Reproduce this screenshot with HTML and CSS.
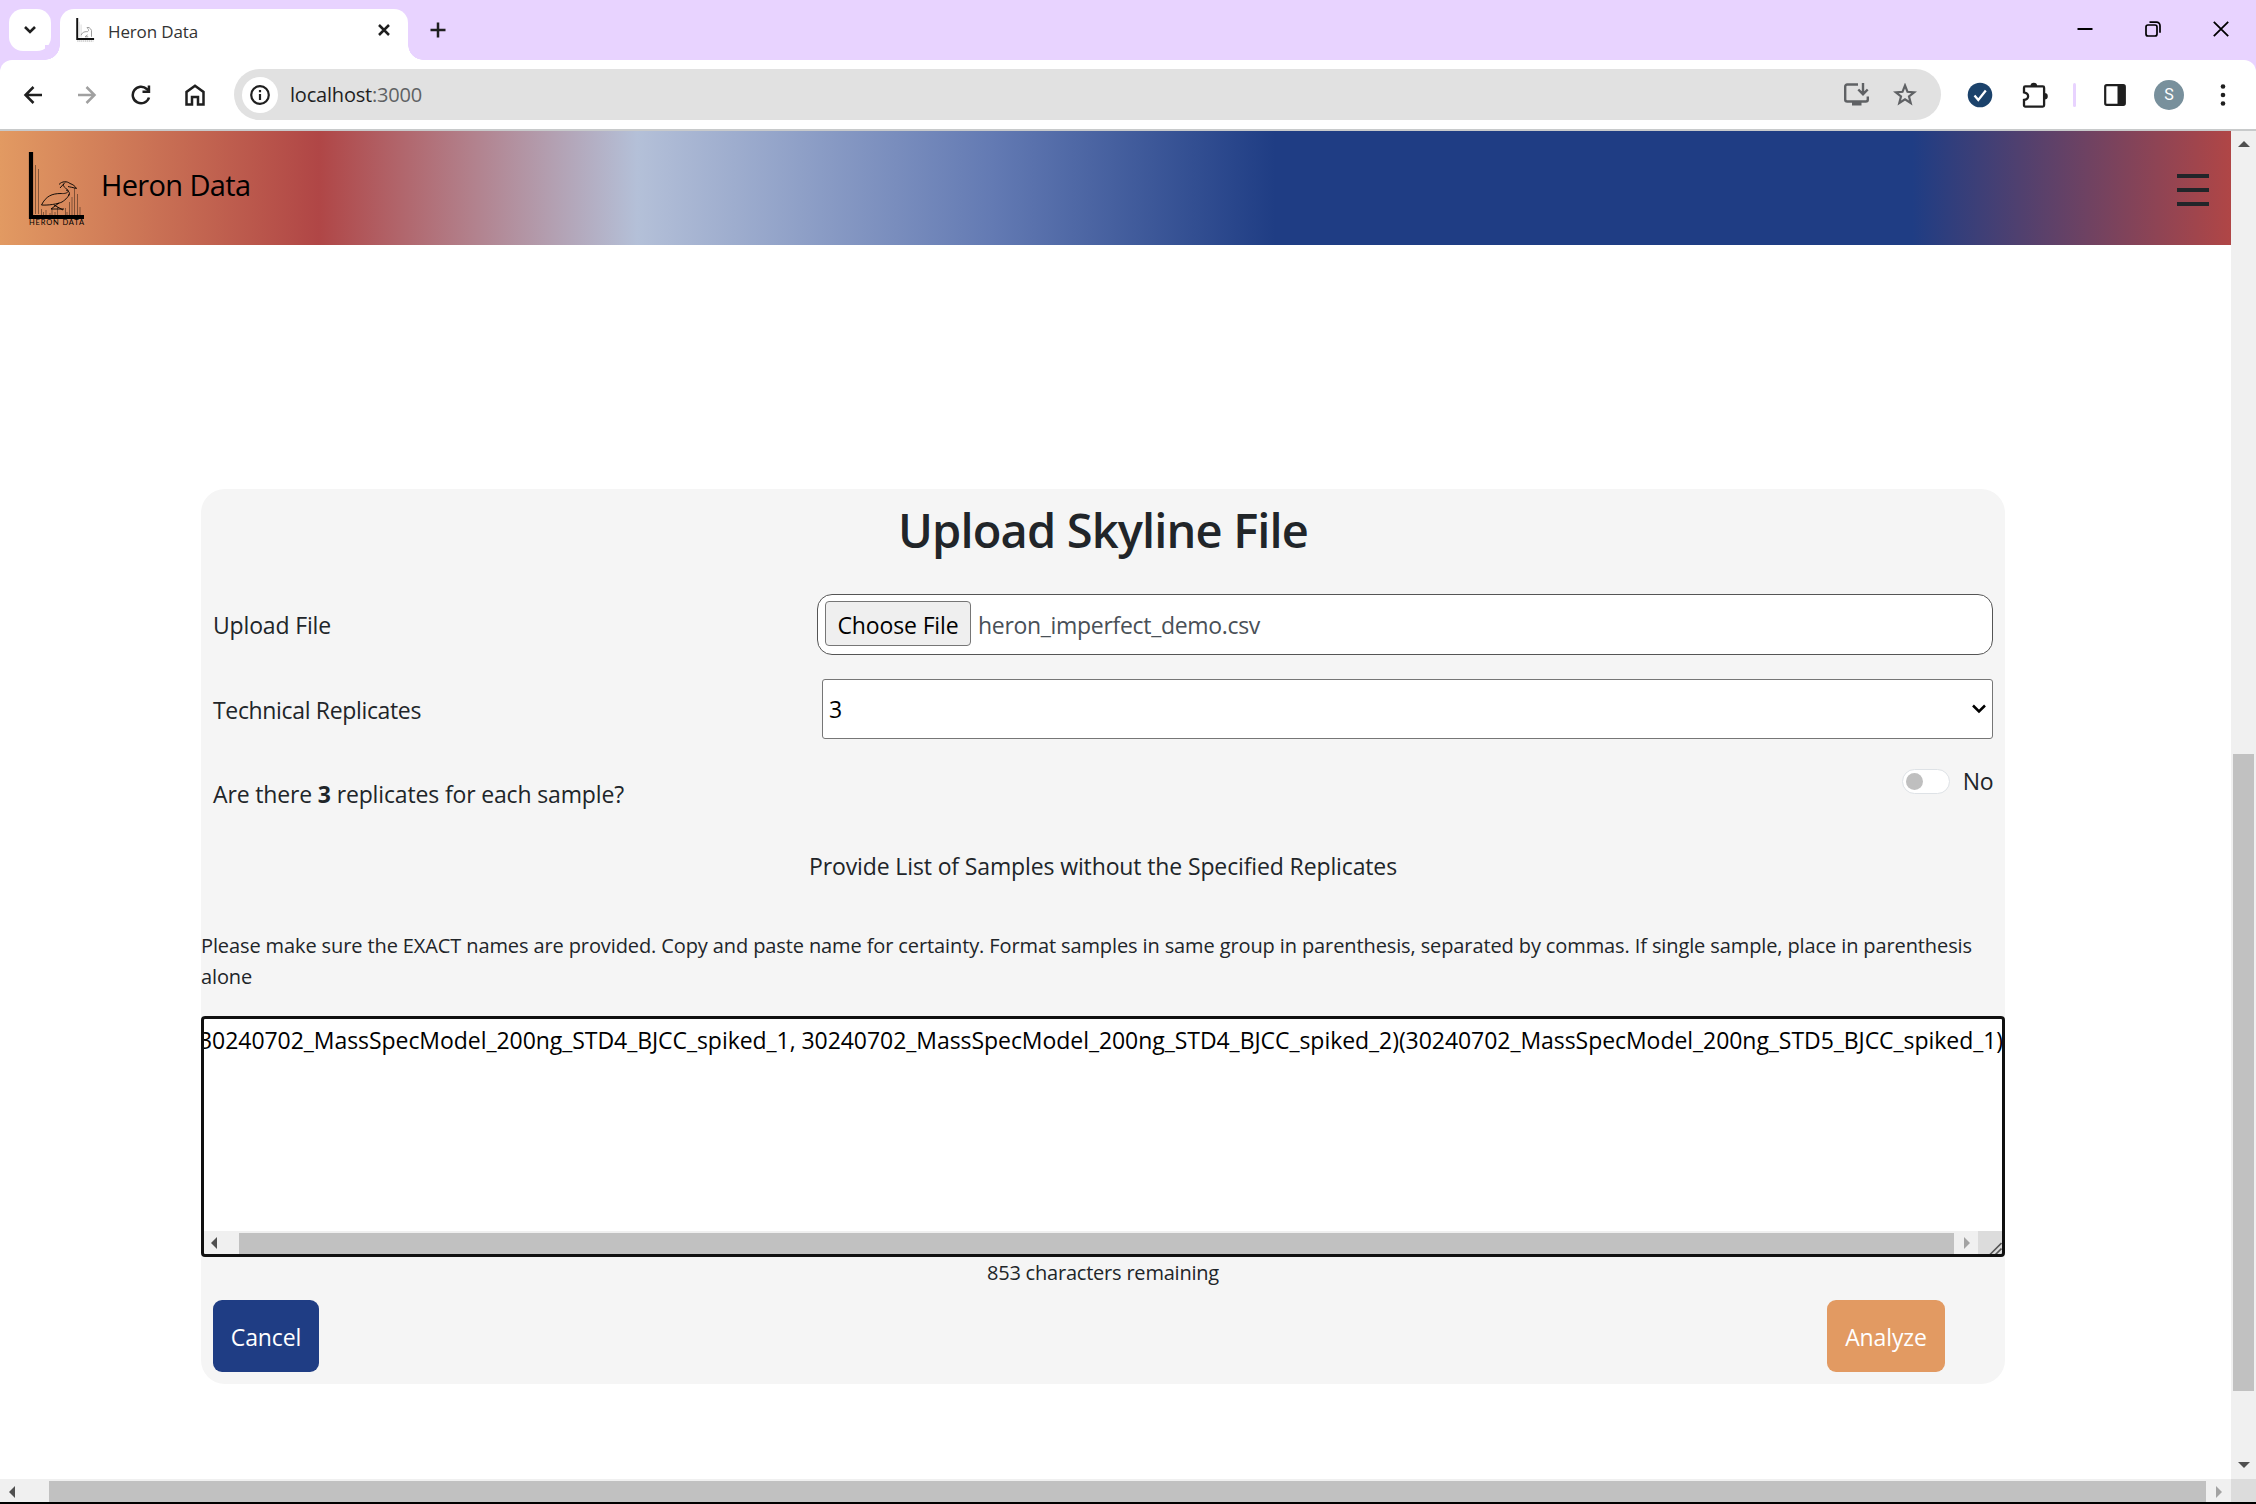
FILE: index.html
```html
<!DOCTYPE html>
<html lang="en">
<head>
<meta charset="utf-8">
<title>Heron Data</title>
<link rel="stylesheet" href="styles.css">
</head>
<body>
<div class="tabstrip">
  <div class="tabsearch"><svg width="14" height="10" viewBox="0 0 14 10"><path d="M2 2l5 5 5-5" fill="none" stroke="#1f1f1f" stroke-width="2.6"/></svg></div>
  <div class="tab">
    <svg class="favicon" width="20" height="24" viewBox="0 0 56 74"><path d="M4 0V65H56" fill="none" stroke="#111" stroke-width="6"/><path d="M10 12V60M16 20V60" stroke="#ccc" stroke-width="2"/><path d="M16 53C20 42 30 42 36 42C42 38 38 34 34 30C38 27 44 30 48 38V58M36 52L28 58H38" fill="none" stroke="#999" stroke-width="3"/><path d="M4 71H54" stroke="#aaa" stroke-width="3" stroke-dasharray="4 2"/></svg>
    <span class="tabtitle">Heron Data</span>
    <svg class="tabclose" width="14" height="14" viewBox="0 0 14 14"><path d="M2 2l10 10M12 2L2 12" stroke="#1f1f1f" stroke-width="2.5"/></svg>
  </div>
  <svg class="newtab" width="16" height="16" viewBox="0 0 16 16"><path d="M8 .5v15M.5 8h15" stroke="#1f1f1f" stroke-width="2.500"/></svg>
  <div class="wincontrols">
    <svg width="16" height="16" viewBox="0 0 16 16"><path d="M.5 8h15" stroke="#000" stroke-width="2"/></svg>
    <svg width="16" height="16" viewBox="0 0 16 16"><rect x="1" y="4" width="11" height="11" rx="2" fill="none" stroke="#000" stroke-width="1.700"/><path d="M4.500 1.200h7a3.500 3.500 0 0 1 3.500 3.500v7" fill="none" stroke="#000" stroke-width="1.700"/></svg>
    <svg width="16" height="16" viewBox="0 0 16 16"><path d="M.8.8l14.400 14.400M15.200.8L.8 15.200" stroke="#000" stroke-width="1.800"/></svg>
  </div>
</div>
<div class="toolbarwrap">
<div class="toolbar">
  <div class="navicons">
    <svg width="20" height="20" viewBox="0 0 20 20"><path d="M19 10H3M10.500 2L2.500 10l8 8" fill="none" stroke="#1f1f1f" stroke-width="2.500"/></svg>
    <svg width="20" height="20" viewBox="0 0 20 20"><path d="M1 10h16M9.500 2l8 8-8 8" fill="none" stroke="#a0a0a0" stroke-width="2.500"/></svg>
    <svg width="20" height="20" viewBox="0 0 20 20"><path d="M18 12.500A8.300 8.300 0 1 1 15.800 4L18 6.300" fill="none" stroke="#1f1f1f" stroke-width="2.500"/><path d="M19.200.5V8H11.500V5.500H16.700V.5z" fill="#1f1f1f"/></svg>
    <svg width="20" height="22" viewBox="0 0 20 22"><path d="M1.500 20.500V8L10 1.700 18.500 8v12.500h-5.500v-7.500H7v7.500z" fill="none" stroke="#1f1f1f" stroke-width="2.500"/></svg>
  </div>
  <div class="omnibox">
    <div class="siteinfo"><svg width="20" height="20" viewBox="0 0 20 20"><circle cx="10" cy="10" r="8.800" fill="none" stroke="#1f1f1f" stroke-width="2.200"/><path d="M10 9v6M10 5v2.200" stroke="#1f1f1f" stroke-width="2.200"/></svg></div>
    <span class="url">localhost<span class="port">:3000</span></span>
    <svg class="install" width="25" height="23" viewBox="0 0 25 23"><path d="M14 1.500H3.200A2 2 0 0 0 1.200 3.500v13a2 2 0 0 0 2 2h18.600a2 2 0 0 0 2-2V13.500" fill="none" stroke="#5f6164" stroke-width="2.400"/><path d="M8 18h9.500v4.500H8z" fill="#5f6164"/><path d="M19 0v11M14.300 6.500L19 11.200l4.700-4.700" fill="none" stroke="#5f6164" stroke-width="2.400"/></svg>
    <svg width="24" height="23" viewBox="0 0 24 23"><path d="M12 2.500l2.500 6.300 6.700.5-5.200 4.200 1.700 6.500L12 16.400 6.300 20l1.700-6.500-5.200-4.200 6.700-.5z" fill="none" stroke="#5f6164" stroke-width="2.200"/></svg>
  </div>
  <svg class="ext1" width="26" height="26" viewBox="0 0 26 26"><circle cx="13" cy="13" r="12.300" fill="#1b426b"/><path d="M7.500 13.500l3.800 4.500 7.500-9.500" fill="none" stroke="#fff" stroke-width="2.300"/></svg>
  <svg class="ext2" width="26" height="26" viewBox="0 0 26 26"><path d="M3.300 4.400h17.500a1.300 1.300 0 0 1 1.300 1.300v17.600a1.300 1.300 0 0 1-1.300 1.300H3.300A1.300 1.300 0 0 1 2 23.300v-5.300c5.500-1 5.500-6.500 0-7.700V5.700a1.300 1.300 0 0 1 1.300-1.300z" fill="none" stroke="#1f1f1f" stroke-width="2.300"/><path d="M8.500 4a3.300 3.300 0 0 1 6.600 0zM22.500 11a3.300 3.300 0 0 1 0 6.600z" fill="#1f1f1f"/></svg>
  <i class="sep"></i>
  <svg class="panelicon" width="22" height="22" viewBox="0 0 22 22"><rect x="1.200" y="1.200" width="19.600" height="19.600" rx="1.500" fill="none" stroke="#1f1f1f" stroke-width="2.200"/><path d="M13.500 1H21v20h-7.500z" fill="#1f1f1f"/></svg>
  <div class="avatar">S</div>
  <svg class="dots" width="6" height="22" viewBox="0 0 6 22"><g fill="#1f1f1f"><circle cx="3" cy="2.500" r="2.300"/><circle cx="3" cy="11" r="2.300"/><circle cx="3" cy="19.500" r="2.300"/></g></svg>
</div>
</div>
<div class="view">
  <div class="page">
    <header class="sitenav">
      <svg class="logo" width="58" height="76" viewBox="0 0 58 76">
        <path d="M4 0V65H57" fill="none" stroke="#000" stroke-width="4.200"/>
        <path d="M8.500 13V62M11.500 17V62" stroke="#000" stroke-opacity=".5" stroke-width=".8"/>
        <path d="M14.500 57v6M16.500 60v3M19 58v5M23 61v2M25 56v7M28 60v3M30.500 55v8M38.500 56v7M40 60v3M42.500 50v13M45 45v18M47.500 36v27M50.500 42v21M53 55v8" stroke="#000" stroke-opacity=".45" stroke-width=".9"/>
        <path d="M14.500 53C19 44 25 41.500 34 41.500M32 32.500C35 29 40 29 43 31.500C46 32.500 48 34 49.500 36.500C46 35.500 43 35 41 34.500M33 36L38 30.500M39 38C42 39 43.500 41 41.500 44M14.500 53C21 53.500 31 52 35 50C39 47.500 42 44 42 42M32 51L24 57H37M27 53L36 58" fill="none" stroke="#000" stroke-width=".9"/>
        <path d="M34 41.500C39 42 43 40 40.500 37.500C38 36 36 34.500 36.500 32" fill="none" stroke="#000" stroke-width=".8"/>
        <text x="2" y="73" font-family="Lato, sans-serif" font-size="7.500" textLength="55">HERON DATA</text>
      </svg>
      <span class="brand">Heron Data</span>
      <div class="burger"><i></i><i></i><i></i></div>
    </header>
    <main class="panel">
      <h1 class="heading">Upload Skyline File</h1>
      <div class="row filerow">
        <span class="uploadlabel">Upload File</span>
        <div class="fileinput"><span class="choose">Choose File</span><span class="filename">heron_imperfect_demo.csv</span></div>
      </div>
      <div class="row selectrow">
        <span class="replabel">Technical Replicates</span>
        <div class="select"><span>3</span><svg width="16" height="10" viewBox="0 0 16 10"><path d="M2 1.500l6 6 6-6" fill="none" stroke="#000" stroke-width="2.500"/></svg></div>
      </div>
      <div class="row togglerow">
        <span class="question">Are there <b>3</b> replicates for each sample?</span>
        <div class="switchwrap"><span class="switch"></span><span class="switchlabel">No</span></div>
      </div>
      <p class="provide">Provide List of Samples without the Specified Replicates</p>
      <p class="note">Please make sure the EXACT names are provided. Copy and paste name for certainty. Format samples in same group in parenthesis, separated by commas. If single sample, place in parenthesis alone</p>
      <div class="textarea">
        <div class="textline">30240702_MassSpecModel_200ng_STD4_BJCC_spiked_1, 30240702_MassSpecModel_200ng_STD4_BJCC_spiked_2)(30240702_MassSpecModel_200ng_STD5_BJCC_spiked_1)</div>
        <div class="hbar inner"><i class="arrow left"></i><i class="thumb"></i><i class="arrow right"></i><svg class="grip" width="24" height="24" viewBox="0 0 24 24"><path d="M11.500 24L23.500 12M17 24l6.500-6.500" stroke="#555" stroke-width="1.600"/></svg></div>
      </div>
      <p class="remaining">853 characters remaining</p>
      <div class="actions"><button class="btn cancel">Cancel</button><button class="btn analyze">Analyze</button></div>
    </main>
  </div>
  <div class="vbar"><i class="arrow up"></i><i class="vthumb"></i><i class="arrow down"></i></div>
</div>
<div class="hbar outer"><i class="arrow left"></i><i class="thumb"></i><i class="arrow right"></i><i class="corner"></i></div>
</body>
</html>
```
FILE: styles.css
```css
* { box-sizing: border-box; }
body { margin: 0; width: 2256px; height: 1504px; overflow: hidden; display: flex; flex-direction: column; background: #fff; border-bottom: 2px solid #000; font-family: "Open Sans", "Noto Sans", sans-serif; font-size: 23px; color: #212529; }
svg { display: block; flex: none; }
i { display: block; flex: none; }
p, h1 { margin: 0; white-space: nowrap; }

.tabstrip { height: 60px; flex: none; background: #e8d3ff; display: flex; align-items: flex-start; }
.tabsearch { width: 42px; height: 42px; margin: 9px 9px 0; border-radius: 14px; background: #fff; display: flex; align-items: center; justify-content: center; }
.tab { position: relative; width: 348px; height: 51px; margin-top: 9px; border-radius: 14px 14px 0 0; background: #fff; display: flex; align-items: center; padding: 0 17px 9px 15px; }
.tab::before, .tab::after { content: ""; position: absolute; bottom: 0; width: 15px; height: 15px; }
.tab::before { left: -15px; background: radial-gradient(circle at 0 0, #e8d3ff 14.500px, #fff 15px); }
.tab::after { right: -15px; background: radial-gradient(circle at 100% 0, #e8d3ff 14.500px, #fff 15px); }
.tabtitle { margin-left: 13px; font-size: 17px; letter-spacing: -.14px; color: #333; white-space: nowrap; line-height: 24px; padding-top: 4px; }
.tabclose { margin-left: auto; }
.newtab { margin: 22px 0 0 22px; }
.wincontrols { margin: 21px 27px 0 auto; display: flex; gap: 52px; }

.toolbarwrap { height: 71px; flex: none; background: #e8d3ff; }
.toolbar { height: 71px; background: #fff; border-bottom: 2px solid #c8cacb; border-radius: 12px 12px 0 0; display: flex; align-items: center; padding: 0 30px 0 23px; }
.navicons { display: flex; align-items: center; gap: 34px; width: 211px; }
.omnibox { width: 1707px; height: 51px; border-radius: 26px; background: #e1e1e1; display: flex; align-items: center; padding: 0 24px 0 8px; }
.siteinfo { width: 36px; height: 36px; border-radius: 50%; background: #fff; display: flex; align-items: center; justify-content: center; }
.url { margin-left: 12px; font-size: 20px; letter-spacing: -.2px; color: #1f1f1f; white-space: nowrap; }
.port { color: #5f6164; }
.install { margin: 0 24px 0 auto; }
.ext1 { margin-left: 26px; }
.ext2 { margin-left: 29px; }
.sep { width: 3px; height: 24px; margin-left: 25px; border-radius: 2px; background: #e8d3ff; }
.panelicon { margin-left: 28px; }
.avatar { width: 30px; height: 30px; margin-left: 28px; border-radius: 50%; background: #78909c; color: #fff; font: 16px/30px Roboto, sans-serif; text-align: center; }
.dots { margin-left: auto; }

.view { height: 1348px; flex: none; display: flex; }
.page { width: 2231px; }
.sitenav { height: 114px; display: flex; background: linear-gradient(90deg, #e29a62 0, #b04646 14.286%, #b4c0d8 28.571%, #637ab3 44.500%, #1f3d84 57.143%, #1f3d84 85.714%, #b04646 100%); padding: 0 22px 0 27px; }
.logo { margin-top: 21px; }
.brand { margin: 35px 0 0 16px; align-self: flex-start; font-size: 29px; letter-spacing: -.65px; line-height: 38px; color: #000; white-space: nowrap; }
.burger { margin: 43px 0 0 auto; width: 32px; display: flex; flex-direction: column; gap: 10px; }
.burger i { height: 4px; background: #212529; }

.panel { width: 1804px; height: 895px; margin: 244px 0 0 201px; border-radius: 24px; background: #f5f5f5; display: flex; flex-direction: column; }
.heading { height: 105px; font-size: 47px; letter-spacing: -.85px; font-weight: 600; line-height: 82px; text-align: center; }
.row { display: flex; justify-content: space-between; align-items: center; padding: 0 12px; white-space: nowrap; }
.filerow { height: 61px; }
.uploadlabel { letter-spacing: -.16px; }
.fileinput { width: 1176px; height: 61px; border: 1px solid #555; border-radius: 15px; background: #fff; display: flex; align-items: center; padding: 0 0 2px 7px; color: #495057; }
.choose { width: 146px; height: 45px; border: 1px solid #767676; border-radius: 4px; background: #efefef; color: #000; text-align: center; line-height: 46px; letter-spacing: -.14px; }
.filename { margin-left: 7px; padding-top: 3px; letter-spacing: -.31px; }
.selectrow { height: 60px; margin-top: 24px; }
.replabel { padding-top: 1px; letter-spacing: -.34px; }
.select { width: 1171px; height: 60px; border: 1px solid #767676; border-radius: 3px; background: #fff; color: #000; display: flex; align-items: center; justify-content: space-between; padding: 0 5px 0 6px; }
.togglerow { height: 84px; align-items: flex-start; line-height: 30px; margin-top: 28px; }
.question { padding-top: 12px; letter-spacing: -.15px; }
.switchwrap { display: flex; align-items: center; gap: 13px; margin-top: -1px; }
.switch { width: 48px; height: 25px; border: 1px solid #dee2e6; border-radius: 13px; background: #fff; display: flex; align-items: center; padding-left: 3px; }
.switch::before { content: ""; width: 17px; height: 17px; border-radius: 50%; background: #bfbfbf; }
.switchlabel { letter-spacing: -.5px; }
.provide { height: 79px; line-height: 30px; text-align: center; letter-spacing: -.127px; }
.note { height: 86px; font-size: 20px; letter-spacing: -.111px; line-height: 31px; white-space: normal; }
.textarea { height: 241px; padding: 3px 0; outline: 3px solid #101010; outline-offset: -3px; border-radius: 4px; background: #fff; display: flex; flex-direction: column; overflow: hidden; flex: none; color: #000; }
.textline { height: 212px; margin-left: -2px; padding-top: 5px; line-height: 32px; letter-spacing: -.054px; white-space: nowrap; }
.remaining { height: 43px; line-height: 31px; font-size: 20px; letter-spacing: -.21px; text-align: center; }
.actions { display: flex; justify-content: space-between; padding: 0 60px 0 12px; }
.btn { height: 72px; padding: 1px 0 0; border: 0; border-radius: 9px; color: #fff; font: 23px "Open Sans", "Noto Sans", sans-serif; letter-spacing: -.12px; }
.cancel { width: 106px; background: #1f3d84; }
.analyze { width: 118px; background: #e29a62; }

.arrow { width: 0; height: 0; border: 6px solid transparent; }
.left { border-left: 0; border-right-color: #505050; }
.right { border-right: 0; border-left-color: #a3a3a3; }
.up { border-top: 0; border-bottom-color: #505050; }
.down { border-bottom: 0; border-top-color: #505050; }
.vbar { width: 25px; background: #f0f0f0; display: flex; flex-direction: column; align-items: center; padding: 10px 0 11px; }
.vthumb { width: 21px; height: 637px; margin-top: 607px; background: #c1c1c1; }
.down { margin-top: auto; }
.hbar { display: flex; align-items: center; background: #f0f0f0; flex: none; }
.hbar .thumb { background: #c1c1c1; height: 21px; }
.outer { height: 23px; padding-left: 9px; padding-top: 2px; }
.outer .thumb { width: 2157px; margin-left: 34px; }
.outer .right { margin-left: 10px; }
.corner { width: 25px; height: 23px; margin: -2px 0 0 auto; background: #dcdcdc; }
.inner { height: 23px; margin: 0 3px; padding-left: 7px; }
.inner .thumb { width: 1715px; margin-left: 22px; margin-top: 2px; }
.inner .right { margin-left: 10px; }
.grip { margin-left: auto; background: #dcdcdc; }
```
